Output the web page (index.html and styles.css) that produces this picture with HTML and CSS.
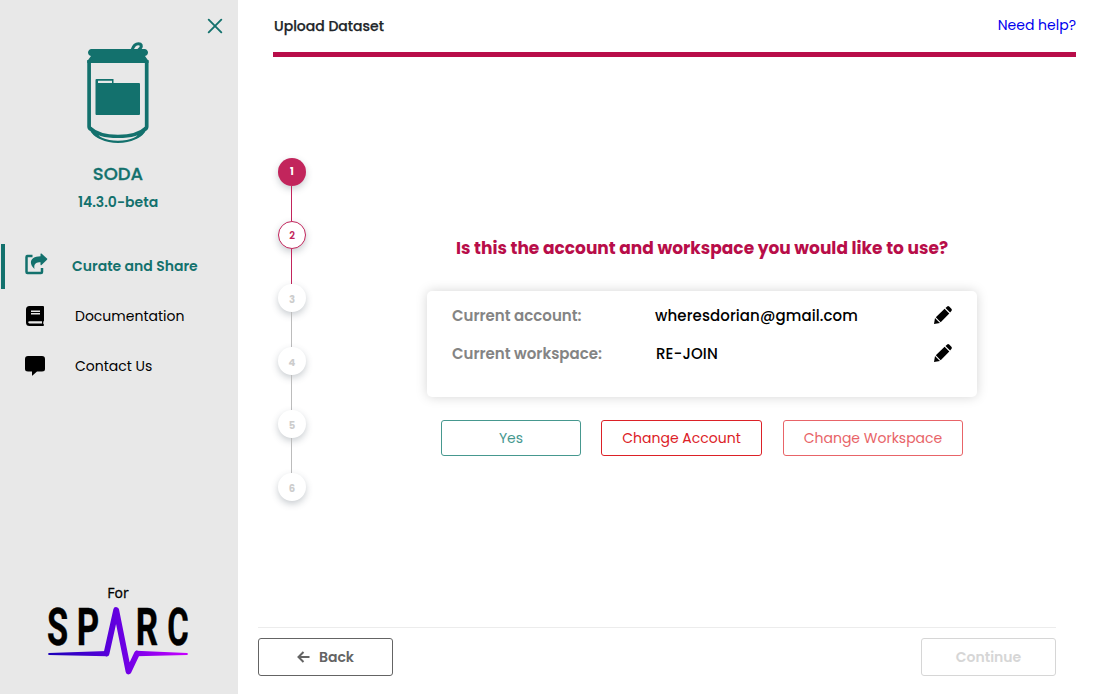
FILE: index.html
```html
<!DOCTYPE html>
<html lang="en">
<head>
<meta charset="utf-8">
<title>SODA</title>
<link rel="stylesheet" href="styles.css">
</head>
<body>
<div class="app">
  <aside class="sidebar">
    <div class="sidebar-top">
      <svg class="close" viewBox="0 0 16 16"><path d="M1.7 1.7 14.3 14.3M14.3 1.7 1.7 14.3"/></svg>
    </div>
    <svg class="can" viewBox="0 0 64 104">
      <path class="solid" d="M5 8H59C63 9 63 14 59 15L62.500 20V22H1.300V20L5 15C1 14 1 9 5 8Z"/>
      <path class="line" stroke-width="3" d="M46 9C47.500 4.500 50 2.800 52.500 2.800C55.500 2.800 56 5 54.500 7L52.500 9"/>
      <path class="line" stroke-width="3.700" d="M3.100 19V85.500Q3.100 87.500 5 88.300M60.700 19V85.500Q60.700 87.500 58.900 88.300"/>
      <path class="line" stroke-width="3.400" d="M4 87C10 93 20 95.400 32 95.400S54 93 60 87"/>
      <path class="line" stroke-width="2.300" d="M4.800 88C10 96.500 20 100.800 32 100.800S54 96.500 59.200 88"/>
      <path class="solid" d="M3 87L12 92 14 98Q6 95 3 87M61 87L52 92 50 98Q58 95 61 87"/>
      <path class="solid" fill-rule="evenodd" d="M10.500 38H27.500V42H53Q54 42 54 43V73Q54 74 53 74H10.500Q9.500 74 9.500 73V39Q9.500 38 10.500 38M12 39.800V42H26V39.800Z"/>
    </svg>
    <div class="brand">SODA</div>
    <div class="version">14.3.0-beta</div>
    <nav class="menu">
      <a class="item active">
        <svg class="icon share" viewBox="0 0 24 22"><path d="M7.500 3H2.500Q1.500 3 1.500 4V19Q1.500 20 2.500 20H16Q17 20 17 19V15" fill="none" stroke="currentColor" stroke-width="2.500"/><path d="M15.500 1.200Q15.500 0 16.500 .6L22 5.500Q22.600 6.100 22 6.700L16.500 12Q15.500 12.600 15.500 11.500V9.300C11 9.300 8.500 11 9.500 16C3 10.500 5.500 3.300 15.500 3.300Z"/></svg>
        <span>Curate and Share</span>
      </a>
      <a class="item">
        <svg class="icon" viewBox="0 0 20 22"><path fill-rule="evenodd" d="M4.500 1H18Q19 1 19 2V15.500Q19 16.300 18.300 16.500V19Q19 19.200 19 20Q19 21 18 21H4.500Q1 21 1 17.500V4.500Q1 1 4.500 1M4.500 16.200Q3.200 16.200 3.200 17.300T4.500 18.500H17V16.200ZM6 5.500V6.900H15V5.500ZM6 8V9.400H15V8Z"/></svg>
        <span>Documentation</span>
      </a>
      <a class="item">
        <svg class="icon" viewBox="0 0 20 22"><path d="M3 1H17Q20 1 20 4V14Q20 16.500 17 16.500H12L7.500 20.500Q7 21 7 20V16.500H3Q0 16.500 0 14V4Q0 1 3 1"/></svg>
        <span>Contact Us</span>
      </a>
    </nav>
    <div class="sponsor">
      <span class="for">For</span>
      <svg class="sparc" viewBox="0 0 144 74">
        <defs><linearGradient id="pulse" gradientUnits="userSpaceOnUse" x1="2" y1="0" x2="142" y2="0"><stop offset="0" stop-color="#1a00b8"/><stop offset=".45" stop-color="#5c00dc"/><stop offset=".65" stop-color="#8200ec"/><stop offset="1" stop-color="#c800ff"/></linearGradient></defs>
        <g class="letters">
          <text transform="translate(1 40.600) scale(.66 1)">S</text>
          <text transform="translate(30.800 40.600) scale(.67 1)">P</text>
          <text transform="translate(89.800 40.600) scale(.67 1)">R</text>
          <text transform="translate(121.200 40.600) scale(.63 1)">C</text>
        </g>
        <path d="M3 49 61 47V52.300L3 51Q1 50 3 49M90 46.800 141 49Q143 50 141 51L90 52.300Z" fill="url(#pulse)"/>
        <path d="M60.500 49.500 70.200 6 82.500 67.500 91 49.500" fill="none" stroke="url(#pulse)" stroke-width="5.800" stroke-linejoin="round" stroke-linecap="round"/>
      </svg>
    </div>
  </aside>
  <main class="main">
    <header class="header"><span class="title">Upload Dataset</span><a class="help">Need help?</a></header>
    <div class="bar"></div>
    <section class="stage">
      <ol class="steps">
        <li class="step done">1</li>
        <li class="step current">2</li>
        <li class="step">3</li>
        <li class="step">4</li>
        <li class="step">5</li>
        <li class="step">6</li>
      </ol>
      <div class="content">
        <h1 class="question">Is this the account and workspace you would like to use?</h1>
        <div class="card">
          <div class="row"><span class="label">Current account:</span><span class="value email">wheresdorian@gmail.com</span>
            <svg class="pencil" viewBox="0 0 18 18"><path d="M0 18 1 12 6 17ZM1.800 11.300 10.600 2.700 15.300 7.400 6.700 16.200ZM11.500 1.900 13.200.4Q14.200-.3 15.200.6L17.400 2.800Q18.300 3.800 17.600 4.800L16.100 6.500Z"/></svg></div>
          <div class="row"><span class="label">Current workspace:</span><span class="value workspace-name">RE-JOIN</span>
            <svg class="pencil" viewBox="0 0 18 18"><path d="M0 18 1 12 6 17ZM1.800 11.300 10.600 2.700 15.300 7.400 6.700 16.200ZM11.500 1.900 13.200.4Q14.200-.3 15.200.6L17.400 2.800Q18.300 3.800 17.600 4.800L16.100 6.500Z"/></svg></div>
        </div>
        <div class="choices">
          <button class="btn yes">Yes</button>
          <button class="btn account">Change Account</button>
          <button class="btn workspace">Change Workspace</button>
        </div>
      </div>
    </section>
    <footer class="footer">
      <button class="btn back"><svg class="arrow" viewBox="0 0 13 12"><path d="M6.500 1 1.500 6 6.500 11M1.500 6H12.500"/></svg><span>Back</span></button>
      <button class="btn continue">Continue</button>
    </footer>
  </main>
</div>
</body>
</html>
```
FILE: styles.css
```css
* { box-sizing: border-box; }
body { margin: 0; font-family: Poppins, Inter, "Open Sans", sans-serif; font-size: 14px; background: #fff; color: #000; }
.app { display: flex; width: 1102px; height: 694px; overflow: hidden; }
.sidebar { width: 238px; background: #e8e8e8; display: flex; flex-direction: column; color: #13716d; }
.sidebar-top { height: 41px; padding: 18px 15px 0 0; display: flex; justify-content: flex-end; }
.close { width: 16px; height: 16px; fill: none; stroke: #13716d; stroke-width: 1.9; stroke-linecap: round; }
.can { width: 64px; height: 104px; margin-left: 86px; }
.solid { fill: #13716d; }
.line { fill: none; stroke: #13716d; }
.brand, .version { width: 236px; text-align: center; white-space: nowrap; }
.brand { font-size: 18px; font-weight: 500; line-height: 26px; margin-top: 16px; -webkit-text-stroke: .3px currentColor; }
.version { font-weight: 600; line-height: 22px; margin-top: 4px; }
.menu { margin-top: 31px; }
.item { display: flex; align-items: center; height: 50px; color: #000; padding-left: 25px; font-size: 14px; white-space: nowrap; }
.item.active { height: 45px; margin: 0 0 2px 1px; padding-left: 20px; border-left: 4px solid #13716d; color: #13716d; font-weight: 600; }
.icon { width: 20px; height: 22px; margin-right: 30px; fill: currentColor; }
.share { width: 24px; margin: -5px 23px 0 0; }
.sponsor { margin-top: auto; height: 111px; width: 236px; display: flex; flex-direction: column; align-items: center; color: #000; }
.for { font: 500 14px/20px "Open Sans", sans-serif; -webkit-text-stroke: .3px currentColor; }
.sparc { width: 144px; height: 74px; margin-top: 1px; overflow: visible; }
.letters { font: 700 52px Roboto, sans-serif; fill: #000; stroke: #000; stroke-width: .4px; }
.main { flex: 1; display: flex; flex-direction: column; background: #fff; }
.header { height: 52px; margin: 0 26px 0 36px; display: flex; justify-content: space-between; line-height: 52px; }
.title { font-weight: 500; color: #212529; -webkit-text-stroke: .25px currentColor; }
.help { color: #0000ee; line-height: 50px; }
.bar { height: 5px; margin: 0 26px 0 35px; background: #b80d49; }
.stage { height: 570px; display: flex; }
.steps { list-style: none; margin: 101px 0 0 40px; padding: 0; width: 28px; display: flex; flex-direction: column; gap: 35px; }
.step { position: relative; height: 28px; padding-top: 3px; border-radius: 50%; background: #fff; color: #ccc; font-size: 10px; font-weight: 700; display: flex; align-items: center; justify-content: center; box-shadow: 0 3px 7px rgba(60, 75, 90, .28); }
.step:not(:last-child)::after { content: ""; position: absolute; left: 13px; top: 28px; width: 1px; height: 35px; background: #bcbcbc; }
.step.done { background: #c2255c; color: #fff; padding-top: 0; }
.step.current { padding-top: 2px; border: 1px solid #c2255c; color: #c2255c; font-weight: 600; }
.step.current:not(:last-child)::after { left: 12px; top: 27px; }
.step.done:not(:last-child)::after, .step.current:not(:last-child)::after { background: #c2255c; }
.content { width: 550px; margin-left: 121px; }
.question { margin: 178px 0 0; height: 26px; font-size: 17px; line-height: 26px; font-weight: 700; color: #b80d49; text-align: center; white-space: nowrap; }
.card { margin-top: 30px; height: 106px; padding: 5px 25px; border-radius: 5px; box-shadow: 0 0 12px rgba(0, 0, 0, .17); }
.row { display: grid; grid-template-columns: 203px 1fr 18px; height: 38px; align-items: center; white-space: nowrap; font-size: 15px; }
.label { color: #848484; font-weight: 600; }
.value { font-weight: 500; letter-spacing: .1px; }
.workspace-name { padding-left: 1px; }
.pencil { width: 18px; height: 18px; margin-top: -1px; overflow: visible; }
.choices { margin: 23px 14px 0; display: flex; }
.btn { height: 36px; border: 1px solid; border-radius: 3px; background: #fff; font-family: inherit; font-size: 14px; padding: 0; white-space: nowrap; display: flex; align-items: center; justify-content: center; }
.yes { width: 140px; color: #46988f; }
.account { width: 161px; margin: 0 21px 0 20px; color: #dc2127; }
.workspace { width: 180px; color: #e86468; }
.footer { width: 798px; margin-left: 20px; padding-top: 10px; border-top: 1px solid #ececec; display: flex; justify-content: space-between; }
.back, .continue { width: 135px; height: 38px; font-weight: 600; }
.back { color: #646464; gap: 9px; }
.arrow { width: 13px; height: 12px; fill: none; stroke: currentColor; stroke-width: 2; }
.continue { color: #d6d6d6; }
```
